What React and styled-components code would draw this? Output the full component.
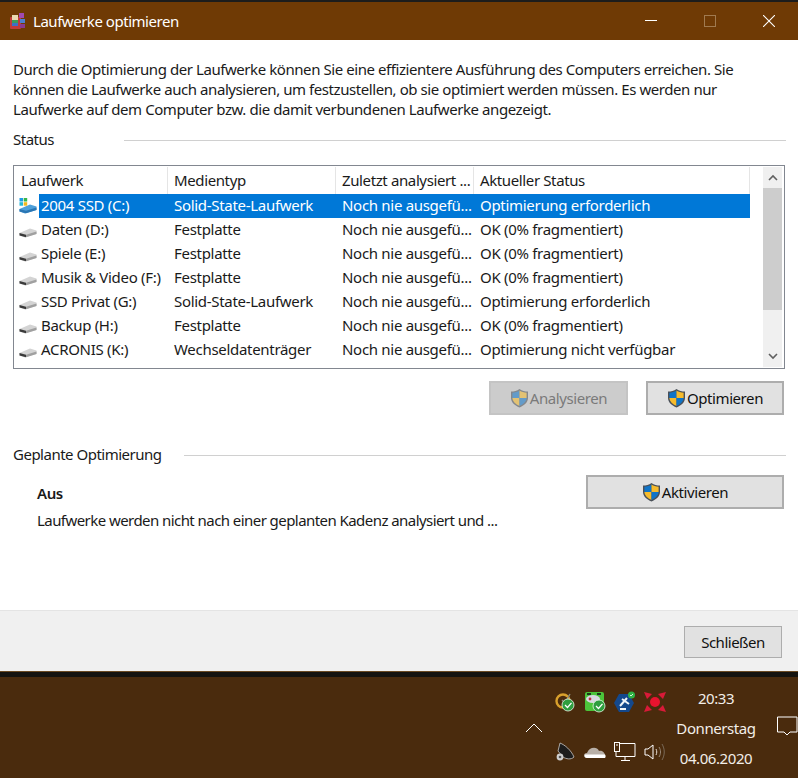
import styled, { createGlobalStyle } from 'styled-components'

const GlobalStyle = createGlobalStyle`
    html, body {
        margin: 0;
        padding: 0;
        background: #4a2b0d;
    }
    * {
        box-sizing: border-box;
    }
`

const Page = styled.div`
    width: 798px;
    height: 778px;
    overflow: hidden;
    display: flex;
    flex-direction: column;
    font-family: 'Noto Sans', 'Open Sans', sans-serif;
    font-size: 15px;
    color: #1a1a1a;
`

const TopEdge = styled.div`
    height: 2px;
    background: #1c1c1c;
`

const TitleBar = styled.div`
    height: 38px;
    background: #6f3a05;
    display: flex;
    align-items: center;
    padding-left: 9px;
    color: #ffffff;
`

const TitleText = styled.span`
    margin-left: 6px;
    flex: 1;
    letter-spacing: -0.47px;
`

const WindowButton = styled.div`
    width: 59px;
    height: 100%;
    display: flex;
    align-items: center;
    justify-content: center;
`

const Body = styled.div`
    height: 570px;
    background: #ffffff;
    padding: 19px 12px 0 13px;
`

const Intro = styled.p`
    margin: 0;
    line-height: 20px;
    width: 730px;
    letter-spacing: -0.43px;
`

const SectionHead = styled.div`
    display: flex;
    align-items: center;
    height: 20px;
    margin-top: ${(p) => p.$top}px;
    letter-spacing: -0.5px;
`

const SectionLabel = styled.span`
    padding-bottom: 3px;
`

const SectionLine = styled.div`
    flex: 1;
    height: 1px;
    background: #d0d0d0;
    margin-left: ${(p) => p.$left}px;
`

const ListBox = styled.div`
    margin-top: 15px;
    width: 772px;
    height: 204px;
    border: 1px solid #828790;
    display: flex;
    padding: 1px;
`

const ListMain = styled.div`
    width: 735px;
    display: flex;
    flex-direction: column;
`

const columns = '153px 168px 138px 1fr'

const HeaderRow = styled.div`
    display: grid;
    grid-template-columns: ${columns};
    height: 27px;
`

const HeaderCell = styled.div`
    display: flex;
    align-items: center;
    padding: 0 0 2px 6px;
    border-right: 1px solid #e5e5e5;
    letter-spacing: -0.38px;
    white-space: nowrap;
    overflow: hidden;
`

const Row = styled.div`
    display: grid;
    grid-template-columns: ${columns};
    height: 24px;
    align-items: center;
    letter-spacing: -0.3px;
    color: ${(p) => (p.$selected ? '#ffffff' : '#1a1a1a')};
`

const DriveCell = styled.div`
    display: flex;
    align-items: center;
    height: 24px;
    padding-left: 4px;
    white-space: nowrap;
`

const DriveName = styled.span`
    display: flex;
    align-items: center;
    flex: 1;
    height: 24px;
    margin-left: 2px;
    padding: 0 0 2px 2px;
    background: ${(p) => (p.$selected ? '#0078d7' : 'transparent')};
`

const Cell = styled.div`
    display: flex;
    align-items: center;
    height: 24px;
    padding: 0 0 2px 6px;
    white-space: nowrap;
    overflow: hidden;
    background: ${(p) => (p.$selected ? '#0078d7' : 'transparent')};
`

const ScrollBar = styled.div`
    width: 19px;
    margin-left: 13px;
    background: #f0f0f0;
    display: flex;
    flex-direction: column;
`

const ScrollArrow = styled.div`
    height: 21px;
    display: flex;
    align-items: center;
    justify-content: center;
`

const ScrollThumb = styled.div`
    height: 122px;
    background: #cdcdcd;
`

const ScrollRest = styled.div`
    flex: 1;
`

const ActionRow = styled.div`
    display: flex;
    justify-content: flex-end;
    gap: 18px;
    margin-top: 12px;
    width: 771px;
`

const Button = styled.div`
    width: ${(p) => p.$width}px;
    height: ${(p) => p.$height || 34}px;
    display: flex;
    align-items: center;
    justify-content: center;
    gap: 1px;
    background: ${(p) => (p.$disabled ? '#cccccc' : '#e1e1e1')};
    border: 2px solid ${(p) => (p.$disabled ? '#c4c4c4' : '#adadad')};
    color: ${(p) => (p.$disabled ? '#7a7a7a' : '#111111')};
    letter-spacing: -0.42px;
`

const PlanRow = styled.div`
    display: flex;
    justify-content: space-between;
    margin-top: 10px;
    padding-left: 24px;
    width: 771px;
`

const PlanText = styled.div`
    display: flex;
    flex-direction: column;
    padding-top: 8px;
    gap: 7px;
`

const PlanTitle = styled.div`
    font-weight: 600;
    line-height: 20px;
    letter-spacing: -0.4px;
`

const PlanDesc = styled.div`
    line-height: 20px;
    letter-spacing: -0.56px;
`

const Footer = styled.div`
    height: 61px;
    background: #f0f0f0;
    border-top: 1px solid #e4e4e4;
    display: flex;
    justify-content: flex-end;
    align-items: flex-start;
    padding: 15px 16px 0 0;
`

const CloseButton = styled(Button)`
    border-width: 1px;
    border-color: #adadad;
    letter-spacing: -0.5px;
`

const DarkStrip = styled.div`
    height: 6px;
    background: #15130f;
    border-top: 1px solid #6b4a22;
`

const Taskbar = styled.div`
    flex: 1;
    background: #4a2b0d;
    display: flex;
    color: #ffffff;
    padding-left: 523px;
`

const ChevronBox = styled.div`
    width: 22px;
    display: flex;
    align-items: center;
    justify-content: center;
    padding-top: 1px;
`

const TrayGrid = styled.div`
    display: grid;
    grid-template-columns: repeat(4, 30px);
    grid-template-rows: 50px 50px;
    margin-left: 5px;
`

const TrayIcon = styled.div`
    display: flex;
    align-items: center;
    justify-content: center;
`

const Clock = styled.div`
    width: 88px;
    margin-left: 2px;
    display: flex;
    flex-direction: column;
    align-items: center;
    line-height: 30px;
    padding-top: 6px;
    letter-spacing: -0.42px;
    color: #f2eee8;
`

const NotifyBox = styled.div`
    margin-left: 17px;
    padding-top: 39px;
`

function Shield({ faded }) {
    return (
        <svg width='19' height='20' viewBox='0 0 19 20' opacity={faded ? 0.55 : 1}>
            <path d='M9.5 1 C7 3 4 3.5 1 3.5 V10 C1 14.5 5 17.5 9.5 19.5 C14 17.5 18 14.5 18 10 V3.5 C15 3.5 12 3 9.5 1 Z' fill='#4a5058' />
            <path d='M9.5 2.5 C7.5 4 5 4.6 2.4 4.7 V10 H9.5 Z' fill='#0f74c8' />
            <path d='M9.5 2.5 C11.5 4 14 4.6 16.6 4.7 V10 H9.5 Z' fill='#f6bb2c' />
            <path d='M2.4 10 H9.5 V18 C6 16.4 2.8 14 2.4 10 Z' fill='#f6bb2c' />
            <path d='M16.6 10 H9.5 V18 C13 16.4 16.2 14 16.6 10 Z' fill='#0f74c8' />
        </svg>
    )
}

function DriveIcon({ system }) {
    const top = system ? '#4fa0da' : '#d4d4d4'
    const side = system ? '#2a76b4' : '#a0a0a0'
    return (
        <svg width='18' height='18' viewBox='0 0 18 18'>
            <path d='M0.5 12 L11 7.5 L17.5 9.5 V13 L6 16.5 L0.5 14.5 Z' fill={top} />
            <path d='M0.5 12 L7 13.8 L7 16.2 L0.5 14.5 Z' fill={system ? side : '#3a3a3a'} />
            <path d='M7 13.8 L17.5 10.5 V13 L7 16.2 Z' fill={side} />
            {system && (
                <g>
                    <rect x='0.5' y='1' width='3.5' height='3.5' fill='#1e9be6' />
                    <rect x='4.7' y='1' width='3.5' height='3.5' fill='#38b54a' />
                    <rect x='0.5' y='5.2' width='3.5' height='3.5' fill='#25b7d8' />
                    <rect x='4.7' y='5.2' width='3.5' height='3.5' fill='#f4b81c' />
                </g>
            )}
        </svg>
    )
}

function AppIcon() {
    return (
        <svg width='18' height='18' viewBox='0 0 18 18'>
            <rect x='1' y='5' width='11' height='12' rx='1' fill='#c23a3a' />
            <rect x='3' y='3' width='6' height='5' fill='#e8d9b0' />
            <rect x='3' y='8' width='6' height='3' fill='#3f9a57' />
            <rect x='3' y='11' width='6' height='3' fill='#3f6fc4' />
            <rect x='10' y='1' width='5' height='5' fill='#a04ab0' />
            <rect x='11' y='7' width='5' height='4' fill='#4d7fd0' />
            <rect x='11' y='12' width='5' height='4' fill='#8a3a90' />
        </svg>
    )
}

function Check({ x, y, r }) {
    return (
        <g>
            <circle cx={x} cy={y} r={r} fill='#2f9e3f' stroke='#e8f5e8' strokeWidth='0.8' />
            <path d={`M${x - r / 2} ${y} l${r / 2.4} ${r / 2.4} l${r / 1.5} -${r / 1.3}`} stroke='#ffffff' strokeWidth='1.3' fill='none' />
        </g>
    )
}

const drives = [
    ['2004 SSD (C:)', 'Solid-State-Laufwerk', 'Optimierung erforderlich'],
    ['Daten (D:)', 'Festplatte', 'OK (0% fragmentiert)'],
    ['Spiele (E:)', 'Festplatte', 'OK (0% fragmentiert)'],
    ['Musik & Video (F:)', 'Festplatte', 'OK (0% fragmentiert)'],
    ['SSD Privat (G:)', 'Solid-State-Laufwerk', 'Optimierung erforderlich'],
    ['Backup (H:)', 'Festplatte', 'OK (0% fragmentiert)'],
    ['ACRONIS (K:)', 'Wechseldatenträger', 'Optimierung nicht verfügbar'],
]

function App() {
    return (
        <Page>
            <GlobalStyle />
            <TopEdge />
            <TitleBar>
                <AppIcon />
                <TitleText>Laufwerke optimieren</TitleText>
                <WindowButton>
                    <svg width='12' height='2'><rect width='12' height='1' fill='#ffffff' /></svg>
                </WindowButton>
                <WindowButton>
                    <svg width='12' height='12'><rect x='0.5' y='0.5' width='11' height='11' fill='none' stroke='#a07a50' /></svg>
                </WindowButton>
                <WindowButton>
                    <svg width='12' height='12'><path d='M0 0 L12 12 M12 0 L0 12' stroke='#ffffff' strokeWidth='1.1' /></svg>
                </WindowButton>
            </TitleBar>
            <Body>
                <Intro>
                    Durch die Optimierung der Laufwerke können Sie eine effizientere Ausführung des Computers erreichen. Sie
                    können die Laufwerke auch analysieren, um festzustellen, ob sie optimiert werden müssen. Es werden nur
                    Laufwerke auf dem Computer bzw. die damit verbundenen Laufwerke angezeigt.
                </Intro>
                <SectionHead $top={11}>
                    <SectionLabel>Status</SectionLabel>
                    <SectionLine $left={70} />
                </SectionHead>
                <ListBox>
                    <ListMain>
                        <HeaderRow>
                            <HeaderCell>Laufwerk</HeaderCell>
                            <HeaderCell>Medientyp</HeaderCell>
                            <HeaderCell>Zuletzt analysiert ...</HeaderCell>
                            <HeaderCell>Aktueller Status</HeaderCell>
                        </HeaderRow>
                        {drives.map(([name, type, status], i) => (
                            <Row key={name} $selected={i === 0}>
                                <DriveCell>
                                    <DriveIcon system={i === 0} />
                                    <DriveName $selected={i === 0}>{name}</DriveName>
                                </DriveCell>
                                <Cell $selected={i === 0}>{type}</Cell>
                                <Cell $selected={i === 0}>Noch nie ausgefü...</Cell>
                                <Cell $selected={i === 0}>{status}</Cell>
                            </Row>
                        ))}
                    </ListMain>
                    <ScrollBar>
                        <ScrollArrow>
                            <svg width='10' height='7'><path d='M1 6 L5 2 L9 6' stroke='#606060' strokeWidth='1.6' fill='none' /></svg>
                        </ScrollArrow>
                        <ScrollThumb />
                        <ScrollRest />
                        <ScrollArrow>
                            <svg width='10' height='7'><path d='M1 1 L5 5 L9 1' stroke='#606060' strokeWidth='1.6' fill='none' /></svg>
                        </ScrollArrow>
                    </ScrollBar>
                </ListBox>
                <ActionRow>
                    <Button $width={139} $disabled>
                        <Shield faded />
                        Analysieren
                    </Button>
                    <Button $width={138}>
                        <Shield />
                        Optimieren
                    </Button>
                </ActionRow>
                <SectionHead $top={30}>
                    <SectionLabel>Geplante Optimierung</SectionLabel>
                    <SectionLine $left={23} />
                </SectionHead>
                <PlanRow>
                    <PlanText>
                        <PlanTitle>Aus</PlanTitle>
                        <PlanDesc>Laufwerke werden nicht nach einer geplanten Kadenz analysiert und ...</PlanDesc>
                    </PlanText>
                    <Button $width={198}>
                        <Shield />
                        Aktivieren
                    </Button>
                </PlanRow>
            </Body>
            <Footer>
                <CloseButton $width={98} $height={32}>Schließen</CloseButton>
            </Footer>
            <DarkStrip />
            <Taskbar>
                <ChevronBox>
                    <svg width='18' height='10'><path d='M1 9 L9 1 L17 9' stroke='#ffffff' strokeWidth='1' fill='none' /></svg>
                </ChevronBox>
                <TrayGrid>
                    <TrayIcon>
                        <svg width='22' height='22' viewBox='0 0 22 22'>
                            <circle cx='9' cy='10' r='6.5' fill='none' stroke='#d9a02c' strokeWidth='2.4' />
                            <path d='M8 9 l3 3 l5 -9' stroke='#8a8a7a' strokeWidth='1.4' fill='none' />
                            <Check x={14} y={14} r={6} />
                        </svg>
                    </TrayIcon>
                    <TrayIcon>
                        <svg width='22' height='22' viewBox='0 0 22 22'>
                            <rect x='1' y='1' width='19' height='19' rx='2' fill='#4cc43a' />
                            <ellipse cx='9' cy='8' rx='7' ry='4' fill='#d8d8e0' />
                            <circle cx='6' cy='8' r='1.4' fill='#c03040' />
                            <rect x='3' y='2' width='4' height='2' fill='#1a3a1a' />
                            <rect x='13' y='2' width='4' height='2' fill='#1a3a1a' />
                            <Check x={15} y={15} r={6} />
                        </svg>
                    </TrayIcon>
                    <TrayIcon>
                        <svg width='22' height='22' viewBox='0 0 22 22'>
                            <path d='M0 12 L5 3 H15 L20 12 L15 21 H5 Z' fill='#14488c' />
                            <path d='M6 15 L13 7 M8 8 L15 13 M6 18 h6' stroke='#f0f4f8' strokeWidth='2' fill='none' />
                            <circle cx='17.5' cy='4' r='3.5' fill='#2fb344' />
                            <path d='M16 4 l1 1 l2 -2' stroke='#ffffff' strokeWidth='0.8' fill='none' />
                        </svg>
                    </TrayIcon>
                    <TrayIcon>
                        <svg width='22' height='22' viewBox='0 0 22 22'>
                            <circle cx='11' cy='11' r='5' fill='#e8132f' />
                            <path d='M0 1 L8 3 L3 8 Z M22 1 L14 3 L19 8 Z M0 21 L8 19 L3 14 Z M22 21 L14 19 L19 14 Z' fill='#d81a38' />
                        </svg>
                    </TrayIcon>
                    <TrayIcon>
                        <svg width='22' height='22' viewBox='0 0 22 22'>
                            <path d='M6 2 C11 4 17 9 20 16 C17 19 12 18 9 16 L4 10 Z' fill='#1c1c1c' stroke='#c8c8c8' strokeWidth='0.8' />
                            <circle cx='6' cy='16' r='3.4' fill='#cfcfcf' />
                            <circle cx='6' cy='16' r='1.3' fill='#555555' />
                        </svg>
                    </TrayIcon>
                    <TrayIcon>
                        <svg width='22' height='14' viewBox='0 0 22 14'>
                            <path d='M3 13 C-1 13 -1 8 3 8 C5 2 13 1 15 6 C19 5 22 9 21 13 Z' fill='#b8b0a8' />
                            <path d='M3 13 C1 13 0 11 1 9.5 H21 C22 11 21.5 12 21 13 Z' fill='#ffffff' />
                        </svg>
                    </TrayIcon>
                    <TrayIcon>
                        <svg width='22' height='20' viewBox='0 0 22 20'>
                            <path d='M2 1.5 H21 V14.5 H2 Z' fill='none' stroke='#ffffff' />
                            <path d='M11 14.5 V18 M7 18.5 H16' stroke='#ffffff' fill='none' />
                            <rect x='0.5' y='0.5' width='5' height='9' fill='#4a2b0d' stroke='#ffffff' />
                            <rect x='2' y='2.5' width='2' height='1' fill='#ffffff' />
                        </svg>
                    </TrayIcon>
                    <TrayIcon>
                        <svg width='22' height='20' viewBox='0 0 22 20'>
                            <path d='M1 7 H4 L9 3 V17 L4 13 H1 Z' fill='none' stroke='#ffffff' />
                            <path d='M12 7 C13 9 13 11 12 13' stroke='#e8e0d8' fill='none' />
                            <path d='M15 5 C17 8 17 12 15 15' stroke='#9a8a78' fill='none' />
                            <path d='M18 2 C21 7 21 13 18 18' stroke='#7a6a58' fill='none' />
                        </svg>
                    </TrayIcon>
                </TrayGrid>
                <Clock>
                    <span>20:33</span>
                    <span>Donnerstag</span>
                    <span>04.06.2020</span>
                </Clock>
                <NotifyBox>
                    <svg width='21' height='22' viewBox='0 0 21 22'>
                        <path d='M0.5 1 H20 V16 H13 L10 19 L7 16 H0.5 Z' fill='none' stroke='#ffffff' />
                    </svg>
                </NotifyBox>
            </Taskbar>
        </Page>
    )
}

export default App
